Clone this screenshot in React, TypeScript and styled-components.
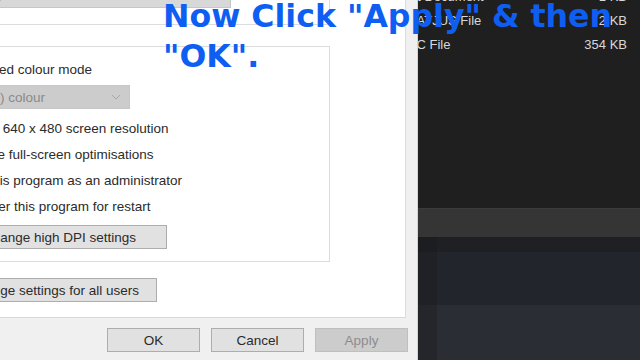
import React from "react";
import styled, { createGlobalStyle } from "styled-components";

const GlobalStyle = createGlobalStyle`
  html, body {
    margin: 0;
    padding: 0;
    background: #1e1e1e;
  }
  body {
    font-family: "Liberation Sans", Arial, sans-serif;
  }
`;

const Screen = styled.div`
  position: relative;
  width: 640px;
  height: 360px;
  overflow: hidden;
  display: flex;
`;

/* ---------- properties dialog (left) ---------- */

const Dialog = styled.div`
  width: 417px;
  flex: none;
  background: #f0f0f0;
  border-right: 1px solid #d4d4d4;
  display: flex;
  flex-direction: column;
  font-size: 13.5px;
  color: #2b2b2b;
`;

const TabPage = styled.div`
  width: 405px;
  height: 317px;
  flex: none;
  background: #ffffff;
  border-right: 1px solid #dcdcdc;
  border-bottom: 1px solid #d9d9d9;
  overflow: hidden;
`;

// the dialog is cut off by the left edge of the frame
const PageInner = styled.div`
  margin-left: -80px;
  width: 485px;
  display: flex;
  flex-direction: column;
  align-items: flex-start;
`;

const GroupBox = styled.div<{ $top: number; $pad: string }>`
  margin: ${({ $top }) => $top}px 0 0 10px;
  padding: ${({ $pad }) => $pad};
  width: 400px;
  box-sizing: border-box;
  border: 1px solid #dcdcdc;
  display: flex;
  flex-direction: column;
  align-items: flex-start;
`;

const Combo = styled.div<{ $width: number; $left: number; $top: number; $bg: string }>`
  margin: ${({ $top }) => $top}px 0 0 ${({ $left }) => $left}px;
  width: ${({ $width }) => $width}px;
  height: 24px;
  box-sizing: border-box;
  padding: 0 8px 0 4px;
  background: ${({ $bg }) => $bg};
  border: 1px solid #c6c6c6;
  display: flex;
  align-items: center;
  justify-content: space-between;
  color: #8a8a8a;
  white-space: nowrap;
`;

const CheckRow = styled.div<{ $height: number }>`
  height: ${({ $height }) => $height}px;
  padding-left: 9px;
  display: flex;
  align-items: center;
  gap: 7px;
  white-space: nowrap;
`;

const CheckBox = styled.span`
  width: 13px;
  height: 13px;
  box-sizing: border-box;
  border: 1px solid #333;
  background: #fff;
`;

const PageButton = styled.div<{ $width: number; $left: number; $top: number }>`
  margin: ${({ $top }) => $top}px 0 0 ${({ $left }) => $left}px;
  width: ${({ $width }) => $width}px;
  height: 24px;
  box-sizing: border-box;
  background: #e1e1e1;
  border: 1px solid #adadad;
  display: flex;
  align-items: center;
  justify-content: center;
  gap: 4px;
  white-space: nowrap;
`;

const ButtonRow = styled.div`
  margin-top: 10px;
  padding-right: 9px;
  display: flex;
  justify-content: flex-end;
  gap: 11px;
`;

const DialogButton = styled.div<{ $disabled?: boolean }>`
  width: 93px;
  height: 24px;
  box-sizing: border-box;
  background: ${({ $disabled }) => ($disabled ? "#cccccc" : "#e1e1e1")};
  border: 1px solid ${({ $disabled }) => ($disabled ? "#bfbfbf" : "#adadad")};
  color: ${({ $disabled }) => ($disabled ? "#8c8c8c" : "#2b2b2b")};
  display: flex;
  align-items: center;
  justify-content: center;
`;

const Chevron = () => (
  <svg width="10" height="6" viewBox="0 0 10 6">
    <path d="M1 1 L5 5 L9 1" fill="none" stroke="#a6a6a6" strokeWidth="1" />
  </svg>
);

const Shield = () => (
  <svg width="16" height="16" viewBox="0 0 16 16">
    <path d="M8 1 L14 3 V8 C14 11.5 11 14 8 15 C5 14 2 11.5 2 8 V3 Z" fill="#2b63c6" />
    <path d="M8 1 L14 3 V8 H8 Z M8 8 H2 C2 11.5 5 14 8 15 Z" fill="#f2c230" />
  </svg>
);

/* ---------- file explorer (right) ---------- */

const Explorer = styled.div`
  flex: 1;
  display: flex;
  flex-direction: column;
  overflow: hidden;
  font-size: 13px;
  color: #d8d8d8;
`;

const FileList = styled.div`
  height: 208px;
  flex: none;
  background: #1f1f1f;
`;

const FileRows = styled.div`
  margin-top: -16px;
  display: flex;
  flex-direction: column;
`;

const FileRow = styled.div`
  height: 24px;
  display: flex;
  align-items: center;
  padding-right: 13px;
  white-space: nowrap;
`;

const FileType = styled.span`
  flex: 1;
  margin-left: -21px;
`;

const FileSize = styled.span`
  text-align: right;
`;

const DetailsBar = styled.div`
  height: 29px;
  flex: none;
  background: #353535;
  border-top: 1px solid #3b3b3b;
  box-sizing: border-box;
`;

const Pane = styled.div<{ $height?: number; $from: string; $to: string }>`
  ${({ $height }) => ($height ? `height: ${$height}px; flex: none;` : "flex: 1;")}
  background: linear-gradient(to right, ${({ $from }) => $from} 0 19px, ${({ $to }) => $to} 19px);
`;

/* ---------- caption overlay ---------- */

const Caption = styled.div`
  position: absolute;
  left: 163px;
  top: -4px;
  font-family: "DejaVu Sans", Verdana, sans-serif;
  font-weight: bold;
  font-size: 31.6px;
  line-height: 40px;
  color: #0f5ef2;
  white-space: nowrap;
`;

const files = [
  { type: "Text Document", size: "1 KB" },
  { type: "MSATJUS File", size: "2 KB" },
  { type: "MSC File", size: "354 KB" },
];

export default function App() {
  return (
    <>
      <GlobalStyle />
      <Screen>
        <Dialog>
          <TabPage>
            <PageInner>
              <GroupBox $top={-40} $pad="23px 0 16px">
                <Combo $width={300} $left={0} $top={0} $bg="#d8d8d8">
                  <span>Windows 8</span>
                  <Chevron />
                </Combo>
              </GroupBox>

              <GroupBox $top={21} $pad="12px 0 12px">
                <CheckRow $height={20}>
                  <CheckBox />
                  Reduced colour mode
                </CheckRow>
                <Combo $width={192} $left={7} $top={6} $bg="#cccccc">
                  <span>8-bit (256) colour</span>
                  <Chevron />
                </Combo>
                <CheckRow $height={26} style={{ marginTop: 6 }}>
                  <CheckBox />
                  Run in 640 x 480 screen resolution
                </CheckRow>
                <CheckRow $height={26}>
                  <CheckBox />
                  Disable full-screen optimisations
                </CheckRow>
                <CheckRow $height={26}>
                  <CheckBox />
                  Run this program as an administrator
                </CheckRow>
                <CheckRow $height={26}>
                  <CheckBox />
                  Register this program for restart
                </CheckRow>
                <PageButton $width={215} $left={21} $top={6}>
                  Change high DPI settings
                </PageButton>
              </GroupBox>

              <PageButton $width={227} $left={10} $top={16}>
                <Shield />
                Change settings for all users
              </PageButton>
            </PageInner>
          </TabPage>

          <ButtonRow>
            <DialogButton>OK</DialogButton>
            <DialogButton>Cancel</DialogButton>
            <DialogButton $disabled>Apply</DialogButton>
          </ButtonRow>
        </Dialog>

        <Explorer>
          <FileList>
            <FileRows>
              {files.map((f) => (
                <FileRow key={f.type}>
                  <FileType>{f.type}</FileType>
                  <FileSize>{f.size}</FileSize>
                </FileRow>
              ))}
            </FileRows>
          </FileList>
          <DetailsBar />
          <Pane $height={15} $from="#1c1d21" $to="#1f2024" />
          <Pane $height={53} $from="#1f2126" $to="#23252c" />
          <Pane $from="#24262b" $to="#2a2d34" />
        </Explorer>

        <Caption>
          Now Click "Apply" &amp; then
          <br />
          "OK".
        </Caption>
      </Screen>
    </>
  );
}
